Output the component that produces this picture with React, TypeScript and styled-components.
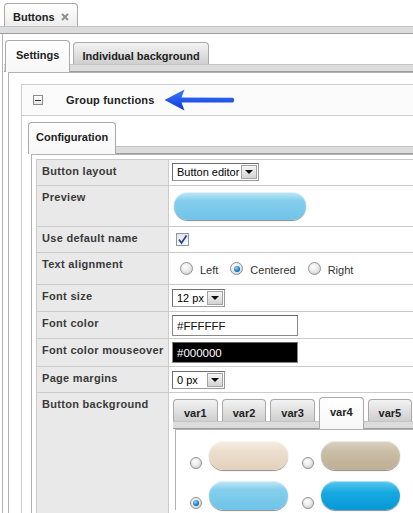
import React from "react";
import styled, { createGlobalStyle, css } from "styled-components";

const GlobalStyle = createGlobalStyle`
  html, body {
    margin: 0;
    padding: 0;
    background: #fff;
    overflow: hidden;
  }
  body {
    font-family: "Liberation Sans", Arial, sans-serif;
    color: #333;
  }
`;

type TabKind = "plain" | "active" | "idle";
type Tone = "sand" | "taupe" | "sky" | "ocean";

const tones: Record<Tone, string> = {
  sand: "linear-gradient(#f6eee5 0%, #ecdecd 35%, #e4d1bc 100%)",
  taupe: "linear-gradient(#ddd3c3 0%, #cabea7 35%, #beaf94 100%)",
  sky: "linear-gradient(#c4e7f7 0%, #84ceec 30%, #6fc4e9 100%)",
  ocean: "linear-gradient(#5cc7ef 0%, #16a9e1 40%, #0598d5 100%)",
};

const Page = styled.div`
  width: 640px;
`;

const Strip = styled.div<{ $pad?: number; $gap?: number; $top?: number }>`
  display: flex;
  align-items: flex-end;
  gap: ${(p) => p.$gap ?? 3}px;
  padding-left: ${(p) => p.$pad ?? 0}px;
  padding-top: ${(p) => p.$top ?? 0}px;
  position: relative;
  z-index: 1;
`;

const Tab = styled.div<{ $kind: TabKind; $pad: number }>`
  display: flex;
  align-items: center;
  gap: 6px;
  box-sizing: border-box;
  padding: 0 ${(p) => p.$pad}px;
  font-size: 11px;
  font-weight: bold;
  color: #222;
  white-space: nowrap;
  border: 1px solid #a9a9a9;
  border-bottom: none;
  border-radius: 4px 4px 0 0;

  ${(p) =>
    p.$kind === "active"
      ? css`
          height: 32px;
          margin-bottom: -8px;
          padding-top: 4px;
          padding-bottom: 8px;
          background: linear-gradient(#ffffff, #f7f7f7);
        `
      : p.$kind === "idle"
      ? css`
          height: 22px;
          padding-top: 4px;
          background: linear-gradient(#f3f3f3, #cfcfcf);
        `
      : css`
          height: 23px;
          padding-top: 3px;
          background: linear-gradient(#ffffff, #ededed);
        `}
`;

const Band = styled.div`
  height: 6px;
  background: #dcdcdc;
  border-top: 1px solid #c4c4c4;
  border-bottom: 1px solid #9d9d9d;
`;

const Frame = styled.div<{ $ml: number; $pt: number; $pl: number; $topLine?: boolean }>`
  margin-left: ${(p) => p.$ml}px;
  border-left: 1px solid #b2b2b2;
  ${(p) => p.$topLine && "border-top: 1px solid #b2b2b2;"}
  padding: ${(p) => p.$pt}px 0 0 ${(p) => p.$pl}px;
`;

const Group = styled.div`
  border: 1px solid #cdcdcd;
  border-right: none;
`;

const GroupHeader = styled.div`
  display: flex;
  align-items: center;
  height: 30px;
  padding-left: 11px;
  background: #fbfbfb;
  border-bottom: 1px solid #cdcdcd;
`;

const Toggle = styled.span`
  width: 10px;
  height: 10px;
  box-sizing: border-box;
  border: 1px solid #8c8c8c;
  background: linear-gradient(#ffffff, #e4e4e4);
  display: flex;
  align-items: center;
  justify-content: center;

  &::after {
    content: "";
    width: 6px;
    height: 1px;
    background: #333;
  }
`;

const GroupTitle = styled.span`
  margin-left: 23px;
  font-size: 11px;
  font-weight: bold;
  letter-spacing: 0.2px;
  color: #222;
`;

const Arrow = styled.svg`
  margin-left: 9px;
  display: block;
`;

const GroupBody = styled.div`
  padding: 6px 0 0 6px;
`;

const Table = styled.div`
  border-top: 1px solid #cbcbcb;
  border-left: 1px solid #cbcbcb;
`;

const Row = styled.div<{ $h: number }>`
  display: grid;
  grid-template-columns: 132px 1fr;
  height: ${(p) => p.$h}px;
  box-sizing: border-box;
  border-bottom: 1px solid #cbcbcb;
`;

const Label = styled.div`
  background: #e9e9e9;
  border-right: 1px solid #cbcbcb;
  padding: 5px 0 0 5px;
  font-size: 11px;
  font-weight: bold;
  letter-spacing: 0.3px;
  color: #3a3a3a;
  white-space: nowrap;
`;

const Value = styled.div<{ $pt?: number; $pl?: number; $center?: boolean }>`
  display: flex;
  align-items: ${(p) => (p.$center ? "center" : "flex-start")};
  padding: ${(p) => p.$pt ?? 3}px 0 0 ${(p) => p.$pl ?? 3}px;
  background: #fff;
  min-width: 0;
`;

const Nested = styled.div`
  padding: 4px 0 0 4px;
  background: #fff;
`;

const Select = styled.div<{ $w: number }>`
  display: inline-flex;
  align-items: center;
  justify-content: space-between;
  box-sizing: border-box;
  width: ${(p) => p.$w}px;
  height: 18px;
  padding-left: 4px;
  border: 1px solid #6f6f6f;
  border-right-color: #9a9a9a;
  border-bottom-color: #9a9a9a;
  background: #fff;
  font-size: 11px;
  color: #000;
`;

const SelectButton = styled.span`
  width: 16px;
  height: 14px;
  margin-right: 1px;
  box-sizing: border-box;
  border: 1px solid #a3a3a3;
  background: linear-gradient(#f6f6f6, #d3d3d3);
  display: flex;
  align-items: center;
  justify-content: center;

  &::after {
    content: "";
    border-left: 4px solid transparent;
    border-right: 4px solid transparent;
    border-top: 4px solid #111;
  }
`;

const Field = styled.div<{ $dark?: boolean }>`
  display: flex;
  align-items: center;
  box-sizing: border-box;
  width: 126px;
  height: 21px;
  padding-left: 4px;
  border: 1px solid #8a8a8a;
  border-top-color: #666;
  font-size: 11.5px;
  background: ${(p) => (p.$dark ? "#000" : "#fff")};
  color: ${(p) => (p.$dark ? "#fff" : "#111")};
`;

const Pill = styled.div<{ $tone: Tone; $w: number; $h: number }>`
  width: ${(p) => p.$w}px;
  height: ${(p) => p.$h}px;
  border-radius: ${(p) => p.$h / 2}px;
  background: ${(p) => tones[p.$tone]};
  box-shadow: 0 1px 1px rgba(0, 0, 0, 0.45), inset 0 1px 0 rgba(255, 255, 255, 0.5);
  flex-shrink: 0;
`;

const Check = styled.span`
  width: 13px;
  height: 13px;
  box-sizing: border-box;
  border: 1px solid #8c97a8;
  background: linear-gradient(#e4e4e4, #fbfbfb);
  display: flex;
  align-items: center;
  justify-content: center;
`;

const RadioGroup = styled.div`
  display: flex;
  align-items: center;
  font-size: 11px;
  color: #333;
`;

const RadioLabel = styled.span`
  margin: 2px 12px 0 7px;
`;

const Radio = styled.span<{ $on?: boolean; $size?: number }>`
  width: ${(p) => p.$size ?? 13}px;
  height: ${(p) => p.$size ?? 13}px;
  border-radius: 50%;
  box-sizing: border-box;
  border: 1px solid #929292;
  background: radial-gradient(circle at 40% 35%, #ffffff 0%, #e8e8e8 50%, #c2c2c2 100%);
  display: inline-flex;
  align-items: center;
  justify-content: center;
  flex-shrink: 0;

  ${(p) =>
    p.$on &&
    css`
      &::after {
        content: "";
        width: 6px;
        height: 6px;
        border-radius: 50%;
        background: radial-gradient(circle at 40% 35%, #8fd8ff 0%, #0b6cb9 65%, #063d75 100%);
      }
    `}
`;

const Swatches = styled.div`
  display: grid;
  grid-template-columns: repeat(3, auto);
  justify-content: start;
  column-gap: 14px;
  row-gap: 11px;
`;

const Swatch = styled.label`
  display: flex;
  align-items: flex-end;
  gap: 7px;

  & > span {
    margin-bottom: 1px;
  }
`;

const swatchRows: { tone: Tone; on?: boolean }[] = [
  { tone: "sand" },
  { tone: "taupe" },
  { tone: "sand" },
  { tone: "sky", on: true },
  { tone: "ocean" },
  { tone: "sky" },
];

function CloseIcon() {
  return (
    <svg width="8" height="8" viewBox="0 0 8 8">
      <path d="M1 1 L7 7 M7 1 L1 7" stroke="#8f8f8f" strokeWidth="2" />
    </svg>
  );
}

function BlueArrow() {
  return (
    <Arrow width="72" height="22" viewBox="0 0 72 22">
      <defs>
        <linearGradient id="arrowFill" x1="0" y1="0" x2="0" y2="1">
          <stop offset="0" stopColor="#3f7dff" />
          <stop offset="1" stopColor="#0b36d8" />
        </linearGradient>
      </defs>
      <path
        d="M0.5 11 L20.5 0.5 L17.5 8.5 L69 8.8 Q71.5 11 69 13.4 L17.5 13.5 L20.5 21.5 Z"
        fill="url(#arrowFill)"
      />
    </Arrow>
  );
}

export default function App() {
  return (
    <Page>
      <GlobalStyle />
      <Strip $pad={4} $top={3}>
        <Tab $kind="plain" $pad={8}>
          Buttons
          <CloseIcon />
        </Tab>
      </Strip>
      <Band />
      <Frame $ml={2} $pt={6} $pl={1}>
        <Strip $pad={1}>
          <Tab $kind="active" $pad={10}>Settings</Tab>
          <Tab $kind="idle" $pad={8}>Individual background</Tab>
        </Strip>
        <Band />
        <Frame $ml={4} $pt={11} $pl={12} $topLine>
          <Group>
            <GroupHeader>
              <Toggle />
              <GroupTitle>Group functions</GroupTitle>
              <BlueArrow />
            </GroupHeader>
            <GroupBody>
              <Strip>
                <Tab $kind="active" $pad={7}>Configuration</Tab>
              </Strip>
              <Band />
              <Frame $ml={3} $pt={4} $pl={4} $topLine>
                <Table>
                  <Row $h={26}>
                    <Label>Button layout</Label>
                    <Value>
                      <Select $w={87}>
                        Button editor
                        <SelectButton />
                      </Select>
                    </Value>
                  </Row>
                  <Row $h={41}>
                    <Label>Preview</Label>
                    <Value $pt={6} $pl={5}>
                      <Pill $tone="sky" $w={132} $h={28} />
                    </Value>
                  </Row>
                  <Row $h={26}>
                    <Label>Use default name</Label>
                    <Value $pt={6} $pl={7}>
                      <Check>
                        <svg width="11" height="11" viewBox="0 0 11 11">
                          <path d="M2 5.5 L4.5 9 L9.5 1.5" fill="none" stroke="#2b3f93" strokeWidth="1.7" />
                        </svg>
                      </Check>
                    </Value>
                  </Row>
                  <Row $h={32}>
                    <Label>Text alignment</Label>
                    <Value $pt={0} $pl={11} $center>
                      <RadioGroup>
                        <Radio />
                        <RadioLabel>Left</RadioLabel>
                        <Radio $on />
                        <RadioLabel>Centered</RadioLabel>
                        <Radio />
                        <RadioLabel>Right</RadioLabel>
                      </RadioGroup>
                    </Value>
                  </Row>
                  <Row $h={27}>
                    <Label>Font size</Label>
                    <Value $pt={4}>
                      <Select $w={53}>
                        12 px
                        <SelectButton />
                      </Select>
                    </Value>
                  </Row>
                  <Row $h={27}>
                    <Label>Font color</Label>
                    <Value>
                      <Field>#FFFFFF</Field>
                    </Value>
                  </Row>
                  <Row $h={28}>
                    <Label>Font color mouseover</Label>
                    <Value>
                      <Field $dark>#000000</Field>
                    </Value>
                  </Row>
                  <Row $h={26}>
                    <Label>Page margins</Label>
                    <Value $pt={4}>
                      <Select $w={53}>
                        0 px
                        <SelectButton />
                      </Select>
                    </Value>
                  </Row>
                  <Row $h={200}>
                    <Label>Button background</Label>
                    <Nested>
                      <Strip $gap={4}>
                        <Tab $kind="idle" $pad={10}>var1</Tab>
                        <Tab $kind="idle" $pad={10}>var2</Tab>
                        <Tab $kind="idle" $pad={10}>var3</Tab>
                        <Tab $kind="active" $pad={10}>var4</Tab>
                        <Tab $kind="idle" $pad={10}>var5</Tab>
                      </Strip>
                      <Band />
                      <Frame $ml={2} $pt={11} $pl={14} $topLine>
                        <Swatches>
                          {swatchRows.map((s, i) => (
                            <Swatch key={i}>
                              <Radio $on={s.on} $size={12} />
                              <Pill $tone={s.tone} $w={79} $h={29} />
                            </Swatch>
                          ))}
                        </Swatches>
                      </Frame>
                    </Nested>
                  </Row>
                </Table>
              </Frame>
            </GroupBody>
          </Group>
        </Frame>
      </Frame>
    </Page>
  );
}
